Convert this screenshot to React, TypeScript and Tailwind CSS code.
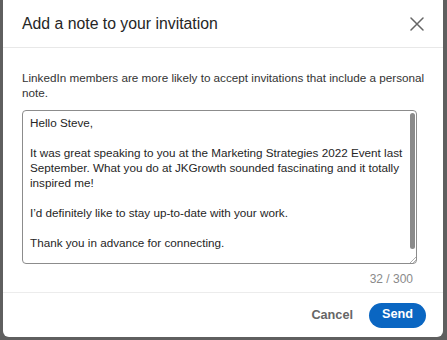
import React from 'react';

const note = `Hello Steve,

It was great speaking to you at the Marketing Strategies 2022 Event last September. What you do at JKGrowth sounded fascinating and it totally inspired me!

I’d definitely like to stay up-to-date with your work.

Thank you in advance for connecting.`;

function CloseIcon() {
  return (
    <svg width="14" height="14" viewBox="0 0 14 14" fill="none" stroke="#666666" strokeWidth="1.5" strokeLinecap="round">
      <path d="M1 1l12 12M13 1L1 13" />
    </svg>
  );
}

function ResizeGrip() {
  return (
    <svg width="6" height="6" viewBox="0 0 6 6" stroke="#9a9a9a" strokeWidth="0.8">
      <path d="M6 0L0 6M6 3L3 6" />
    </svg>
  );
}

export default function App() {
  return (
    <div className="flex h-[340px] w-[447px] bg-[#5f5f5f] pl-[3px] font-['Liberation_Sans',Arial,sans-serif]">
      <div className="flex h-[337px] w-[440px] flex-col rounded-b-[6px] bg-white">
        {/* header */}
        <div className="flex h-[48px] items-center justify-between border-b border-[#e8e8e8] pl-[19px] pr-[16px]">
          <h2 className="text-[15.8px] leading-[20px] text-[#262626]">Add a note to your invitation</h2>
          <button className="flex h-[20px] w-[20px] items-center justify-center">
            <CloseIcon />
          </button>
        </div>

        {/* body */}
        <div className="flex flex-col border-b border-[#ececec] pl-[19px] pr-[17px] pt-[22px] pb-[5px]">
          <p className="text-[11.7px] leading-[15px] text-[#333333]">
            LinkedIn members are more likely to accept invitations that include a personal note.
          </p>
          <div className="relative mt-[10px] h-[154px] w-[395px] overflow-hidden rounded-[4px] border border-[#8c8c8c] bg-white pl-[7px] pr-[12px] pt-[4px]">
            <div className="whitespace-pre-line text-[11.7px] leading-[15px] text-[#262626]">{note}</div>
            <div className="absolute right-[1px] top-[2px] h-[136px] w-[5px] rounded-full bg-[#8a8a8a]" />
            <div className="absolute bottom-[0px] right-[0px]">
              <ResizeGrip />
            </div>
          </div>
          <div className="mt-[8px] w-[395px] pr-[4px] text-right text-[12px] leading-[15px] text-[#8a8a8a]">32 / 300</div>
        </div>

        {/* footer */}
        <div className="flex h-[44px] items-center justify-end gap-[16px] pr-[17px]">
          <button className="text-[12.7px] font-bold leading-[16px] text-[#666666]">Cancel</button>
          <button className="flex h-[25px] w-[57px] items-center justify-center rounded-full bg-[#0a66c2] text-[12.7px] font-bold text-white">
            Send
          </button>
        </div>
      </div>
    </div>
  );
}
